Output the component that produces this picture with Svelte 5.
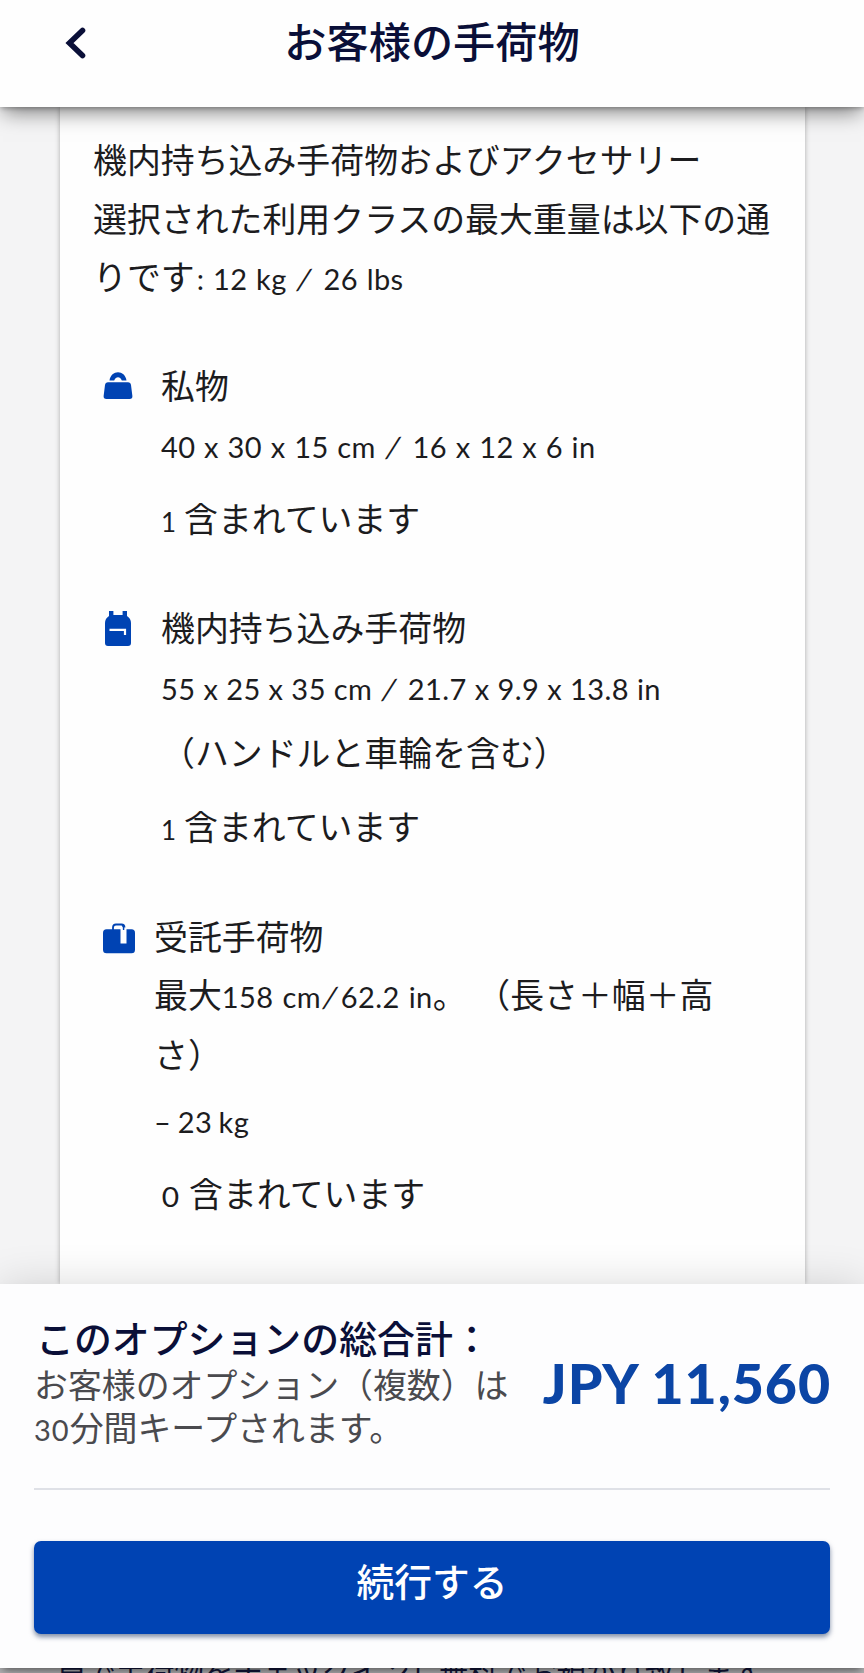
<script lang="ts">
  const included = '含まれています';
</script>

<div class="screen">
  <header class="topbar">
    <button class="back" aria-label="戻る">
      <svg width="24" height="34" viewBox="0 0 24 34" fill="none" stroke="#0a0f38" stroke-width="5.6">
        <path d="M18.5 4.5 L5.5 17 L18.5 29.5" stroke-linecap="round" />
      </svg>
    </button>
    <h1>お客様の手荷物</h1>
  </header>

  <main class="content">
    <section class="card">
      <p class="intro">
        機内持ち込み手荷物およびアクセサリー<br />
        選択された利用クラスの最大重量は以下の通りです<span class="lat max">: 12 kg <i>/</i> 26 lbs</span>
      </p>

      <article class="bag personal">
        <svg class="icon" width="32" height="32" viewBox="0 0 32 32" fill="#0043b3">
          <path d="M7.5 10.5 C9 -0.5 23 -0.5 24.5 10.5 L19.8 10.5 C18 6.3 14 6.3 12.2 10.5Z" />
          <path d="M6 12.2 H26 Q28.5 12.2 29 15 L30.4 26 Q30.6 29 27.6 29 H4.4 Q1.4 29 1.6 26 L3 15 Q3.5 12.2 6 12.2Z" />
        </svg>
        <div class="details">
          <h2>私物</h2>
          <p class="size lat">40 x 30 x 15 cm <i>/</i> 16 x 12 x 6 in</p>
          <p class="count"><span class="num">1</span>{included}</p>
        </div>
      </article>

      <article class="bag cabin">
        <svg class="icon" width="32" height="36" viewBox="0 0 32 36">
          <path fill="#0043b3" d="M7 0 H11.4 V4 H20.6 V0 H25 V5 Q29 7.5 29 12 V32 Q29 35 26 35 H6 Q3 35 3 32 V12 Q3 7.5 7 5Z" />
          <path fill="none" stroke="#fff" stroke-width="2.2" d="M7.5 18.8 H23 V24" />
        </svg>
        <div class="details">
          <h2>機内持ち込み手荷物</h2>
          <p class="size lat">55 x 25 x 35 cm <i>/</i> 21.7 x 9.9 x 13.8 in</p>
          <p class="note">（ハンドルと車輪を含む）</p>
          <p class="count"><span class="num">1</span>{included}</p>
        </div>
      </article>

      <article class="bag checked">
        <svg class="icon" width="34" height="32" viewBox="0 0 34 32">
          <rect x="1" y="6.2" width="32" height="24" rx="3.5" fill="#0043b3" />
          <path fill="none" stroke="#0043b3" stroke-width="1.8" d="M11 7 V4.5 Q11 1.5 14 1.5 H19.5 Q22.5 1.5 22.5 4.5 V7" />
          <rect x="18.5" y="4.5" width="6" height="16" fill="#fff" />
          <path fill="none" stroke="#0043b3" stroke-width="1.4" d="M20 2 Q22 3 21.6 7" />
        </svg>
        <div class="details">
          <h2>受託手荷物</h2>
          <p class="limit">最大<span class="lat">158 cm<i>/</i>62.2 in</span>。 （長さ＋幅＋高さ）</p>
          <p class="weight lat">– 23 kg</p>
          <p class="count"><span class="num">0</span>{included}</p>
        </div>
      </article>
    </section>
  </main>

  <footer class="summary">
    <div class="total">
      <div class="label">
        <h3>このオプションの総合計：</h3>
        <p>お客様のオプション（複数）は<br /><span class="lat minutes">30</span>分間キープされます。</p>
      </div>
      <strong class="price">JPY 11,560</strong>
    </div>
    <button class="continue">続行する</button>
  </footer>

  <div class="behind">
    <p>員で手荷物をチェックインし無料でお預かり致します</p>
  </div>
</div>

<style>
  :global(body) {
    margin: 0;
  }
  h1,
  h2,
  h3,
  p {
    margin: 0;
    font-weight: 400;
  }
  button {
    border: 0;
    padding: 0;
    font-family: inherit;
    cursor: pointer;
  }
  .screen {
    display: flex;
    flex-direction: column;
    height: 1673px;
    overflow: hidden;
    background: #f4f4f5;
    color: #1c1c1e;
    font-family: Lato, 'Noto Sans CJK JP', sans-serif;
    font-size: 33.9px;
  }
  .lat {
    font-size: 29px;
    letter-spacing: 0.45px;
  }
  /* wide, slanted separator between metric and imperial values */
  .lat i {
    display: inline-block;
    padding: 0 3px;
    line-height: 1;
    font-style: normal;
    transform: skewX(-13deg);
  }

  .topbar {
    position: relative;
    z-index: 2;
    flex: none;
    display: grid;
    grid-template-columns: 64px 1fr 64px;
    align-items: start;
    height: 107px;
    box-sizing: border-box;
    padding: 11px 0 0;
    background: #fefefe;
    box-shadow: 0 8px 20px -3px rgba(0, 0, 0, 0.5), 0 2px 5px -1px rgba(0, 0, 0, 0.3);
  }
  .back {
    justify-self: end;
    width: 24px;
    height: 34px;
    margin: 15px -24px 0 0;
    background: none;
  }
  .back svg {
    display: block;
  }
  h1 {
    text-align: center;
    font-size: 42.2px;
    line-height: 61px;
    font-weight: 500;
    color: #0a0f38;
  }

  .content {
    flex: none;
    height: 1177px;
    padding: 0 59px 0 60px;
  }
  .card {
    height: 100%;
    box-sizing: border-box;
    padding: 24px 30px 0 33px;
    background: #fefefe;
    box-shadow: 0 0 5px rgba(0, 0, 0, 0.3);
  }
  .intro {
    line-height: 58.7px;
  }
  .max {
    margin-left: 2px;
    word-spacing: 0.7px;
  }
  .bag {
    display: flex;
    align-items: flex-start;
  }
  .personal {
    margin-top: 48px;
  }
  .cabin {
    margin-top: 48px;
  }
  .checked {
    margin-top: 49px;
  }
  .icon {
    flex: none;
    margin: 15px 18px 0 9px;
  }
  .personal .icon,
  .cabin .icon {
    margin: 13px 27px 0 9px;
  }
  .cabin .icon {
    margin-top: 12px;
  }
  h2,
  .limit {
    font-size: 33.9px;
    line-height: 58px;
  }
  .size {
    line-height: 64px;
  }
  .personal .size {
    word-spacing: 0.7px;
  }
  .note {
    line-height: 64px;
  }
  .count {
    line-height: 58px;
    margin-top: 11px;
  }
  .cabin .count {
    margin-top: 13px;
  }
  .num {
    display: inline-block;
    min-width: 17px;
    margin-right: 6px;
    font-size: 26px;
  }
  .checked .details {
    width: 590px;
  }
  .limit {
    word-spacing: 1px;
  }
  .weight {
    line-height: 58px;
    margin-top: 9px;
    word-spacing: -1.5px;
  }
  .checked .count {
    margin-top: 14px;
    padding-left: 9px;
  }
  .checked .num {
    margin-right: 9px;
    transform: scaleX(1.15);
  }

  .summary {
    position: relative;
    z-index: 2;
    flex: none;
    height: 384px;
    box-sizing: border-box;
    padding: 31px 34px 0;
    background: #fdfdfe;
    box-shadow: 0 0 40px rgba(0, 0, 0, 0.14), 0 5px 8px -3px rgba(0, 0, 0, 0.5);
  }
  .total {
    display: flex;
    justify-content: space-between;
    align-items: flex-start;
    height: 173px;
    border-bottom: 2px solid #dfe1e7;
  }
  .label h3 {
    padding-left: 2px;
    font-size: 37.9px;
    line-height: 48px;
    font-weight: 500;
    color: #0a0f38;
  }
  .label p {
    padding-top: 1px;
    line-height: 43px;
    color: #4a4a4e;
    white-space: nowrap;
  }
  .minutes {
    letter-spacing: 1px;
  }
  .price {
    margin-top: 35px;
    font-size: 55.5px;
    line-height: 66px;
    font-weight: 900;
    letter-spacing: 0.9px;
    margin-right: -1px;
    color: #0b45a5;
    white-space: nowrap;
  }
  .continue {
    display: block;
    width: 100%;
    height: 93px;
    margin-top: 51px;
    padding-bottom: 16px;
    border-radius: 7px;
    background: #0043b3;
    box-shadow: 0 3px 5px rgba(0, 30, 80, 0.5);
    color: #fff;
    font-size: 37.7px;
    font-weight: 500;
  }

  .behind {
    flex: 1;
    overflow: hidden;
    padding-left: 57px;
    background: #b5b5b7;
  }
  .behind p {
    margin-top: -16px;
    line-height: 40px;
    font-size: 29.4px;
    white-space: nowrap;
    color: #12163a;
  }
</style>
